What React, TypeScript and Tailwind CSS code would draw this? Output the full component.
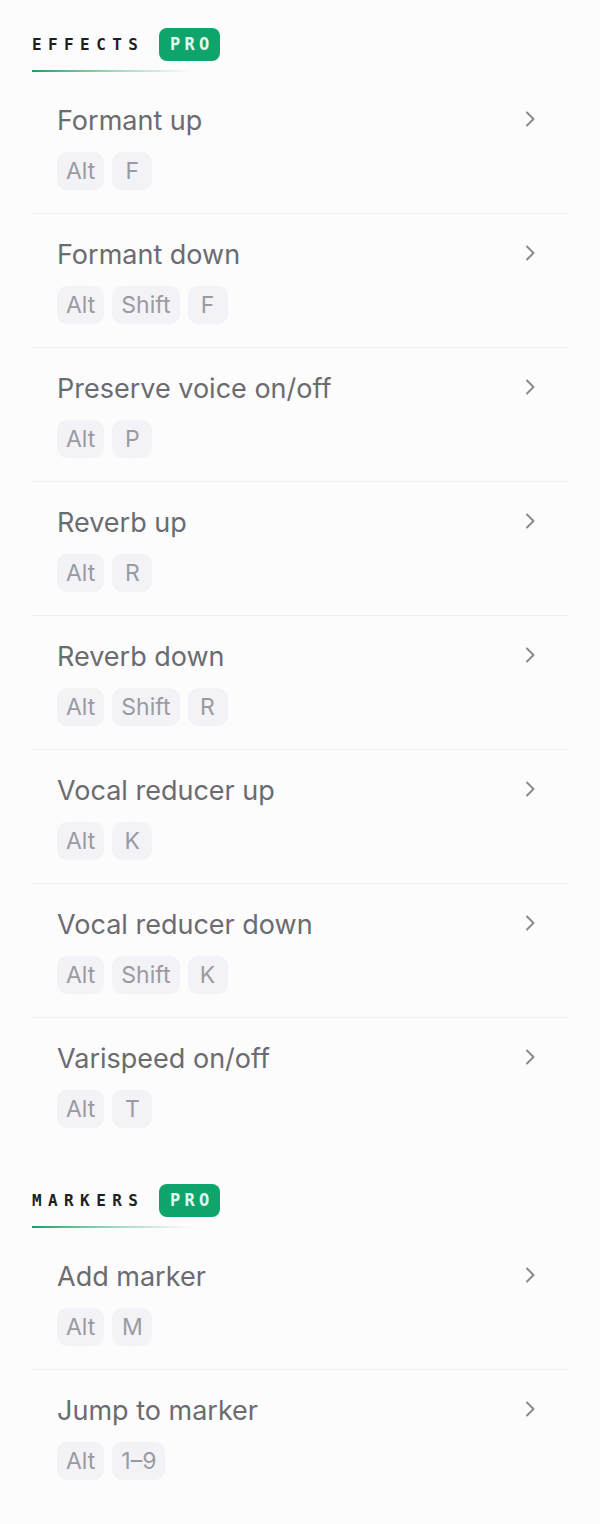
import React from "react";

type Item = { title: string; keys: string[] };

const effects: Item[] = [
  { title: "Formant up", keys: ["Alt", "F"] },
  { title: "Formant down", keys: ["Alt", "Shift", "F"] },
  { title: "Preserve voice on/off", keys: ["Alt", "P"] },
  { title: "Reverb up", keys: ["Alt", "R"] },
  { title: "Reverb down", keys: ["Alt", "Shift", "R"] },
  { title: "Vocal reducer up", keys: ["Alt", "K"] },
  { title: "Vocal reducer down", keys: ["Alt", "Shift", "K"] },
  { title: "Varispeed on/off", keys: ["Alt", "T"] },
];

const markers: Item[] = [
  { title: "Add marker", keys: ["Alt", "M"] },
  { title: "Jump to marker", keys: ["Alt", "1–9"] },
];

function Chevron() {
  return (
    <svg width="14" height="18" viewBox="0 0 14 18" fill="none" className="mt-[6px]">
      <path d="M4 2.5 L10.5 9 L4 15.5" stroke="#8a8a90" strokeWidth="2" strokeLinecap="round" strokeLinejoin="round" />
    </svg>
  );
}

function Header({ label }: { label: string }) {
  return (
    <div className="flex flex-col">
      <div className="flex items-center h-[33px]">
        <span className="font-['DejaVu_Sans_Mono',monospace] font-bold text-[16px] tracking-[0.4em] text-[#1f1f22]">
          {label}
        </span>
        <span className="ml-[15px] h-[33px] w-[61px] rounded-[8px] bg-[#0ea46c] flex items-center justify-center font-['DejaVu_Sans_Mono',monospace] font-bold text-[17px] tracking-[0.25em] pl-[4px] text-[#e3faef]">
          PRO
        </span>
      </div>
      <div className="mt-[9px] h-[2px] w-[160px] bg-gradient-to-r from-[#119e6b] via-[#9bd8bf] to-transparent" />
    </div>
  );
}

function Row({ item, last }: { item: Item; last: boolean }) {
  return (
    <div className={"flex justify-between pl-[25px] pr-[31px] pt-[24px] pb-[23px] " + (last ? "" : "border-b border-[#f0f0f3]")}>
      <div className="flex flex-col">
        <div className="h-[32px] flex items-center text-[27px] text-[#6b6b70] leading-none">{item.title}</div>
        <div className="flex gap-[8px] mt-[16px]">
          {item.keys.map((k) => (
            <span
              key={k}
              className="h-[38px] min-w-[40px] px-[9px] rounded-[10px] bg-[#f3f3f7] flex items-center justify-center text-[23px] text-[#9a9aa1] leading-none"
            >
              {k}
            </span>
          ))}
        </div>
      </div>
      <Chevron />
    </div>
  );
}

function Section({ label, items }: { label: string; items: Item[] }) {
  return (
    <div className="flex flex-col">
      <Header label={label} />
      <div className="flex flex-col mt-[8px]">
        {items.map((it, i) => (
          <Row key={it.title} item={it} last={i === items.length - 1} />
        ))}
      </div>
    </div>
  );
}

export default function App() {
  return (
    <div className="w-[600px] min-h-[1524px] bg-[#fcfcfd] px-[32px] pt-[28px] font-['Inter','Noto_Sans',sans-serif]">
      <div className="flex flex-col gap-[33px]">
        <Section label="EFFECTS" items={effects} />
        <Section label="MARKERS" items={markers} />
      </div>
    </div>
  );
}
